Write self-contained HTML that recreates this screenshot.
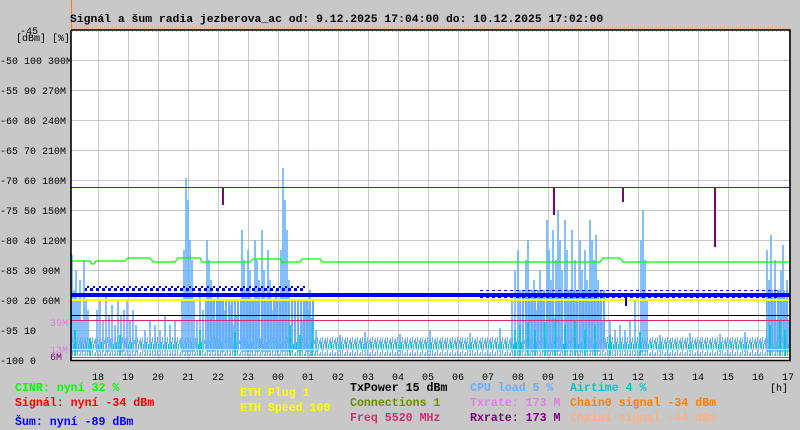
<!DOCTYPE html>
<html><head><meta charset="utf-8"><style>
html,body{margin:0;padding:0;background:#c8c8c8;width:800px;height:430px;overflow:hidden}
svg{display:block}
text{font-family:"Liberation Mono",monospace}
.ax{font-size:10px;fill:#000}
.lg{font-size:11.6px;font-weight:bold}
</style></head><body>
<svg width="800" height="430" xmlns="http://www.w3.org/2000/svg">
<defs>
<pattern id="pb" width="5" height="14" patternUnits="userSpaceOnUse">
<rect x="0" y="2" width="1" height="10" fill="#66b0ff"/><rect x="1" y="6" width="1" height="8" fill="#00c8c8"/><rect x="2" y="0" width="1" height="7" fill="#66b0ff"/><rect x="3" y="8" width="1" height="6" fill="#00c8c8"/><rect x="4" y="4" width="1" height="4" fill="#66b0ff"/>
</pattern>
<pattern id="po" width="4" height="6" patternUnits="userSpaceOnUse">
<rect x="0" y="1" width="1" height="5" fill="#ffb080"/><rect x="2" y="3" width="1" height="3" fill="#ffb080"/>
</pattern>
<pattern id="pn" width="6" height="8" patternUnits="userSpaceOnUse">
<rect x="0" y="0" width="3" height="3" fill="#0000ff"/><rect x="3" y="5" width="2" height="3" fill="#0000ff"/>
</pattern>
<pattern id="pd" width="3" height="9" patternUnits="userSpaceOnUse">
<rect x="0" y="0" width="2" height="9" fill="#66b0ff"/>
</pattern>
</defs>
<rect x="71" y="30" width="719" height="330" fill="#fff"/>
<path stroke="#c8c8c8" stroke-width="1" d="M98.5 30V360M128.5 30V360M158.5 30V360M188.5 30V360M218.5 30V360M248.5 30V360M278.5 30V360M308.5 30V360M338.5 30V360M368.5 30V360M398.5 30V360M428.5 30V360M458.5 30V360M488.5 30V360M518.5 30V360M548.5 30V360M578.5 30V360M608.5 30V360M638.5 30V360M668.5 30V360M698.5 30V360M728.5 30V360M758.5 30V360M71 60.5H790M71 90.5H790M71 120.5H790M71 150.5H790M71 180.5H790M71 210.5H790M71 240.5H790M71 270.5H790M71 300.5H790M71 330.5H790"/>
<rect x="71" y="24" width="719" height="6" fill="url(#po)"/>
<rect x="71" y="30" width="719" height="2" fill="url(#po)"/>
<rect x="71" y="0" width="1" height="30" fill="#ff8000"/>
<rect x="71" y="337" width="719" height="19" fill="url(#pb)"/>
<rect x="205" y="300" width="110" height="50" fill="url(#pd)"/>
<rect x="520" y="290" width="85" height="60" fill="url(#pd)"/>
<rect x="766" y="290" width="23" height="60" fill="url(#pd)"/>
<path stroke="#66b0ff" stroke-width="1.6" fill="none" d="M72 352V255M74 352V290M76 352V270M78 352V300M80 352V280M82 352V320M84 352V260M86 352V300M88 352V310M97 352V310M100 352V300M103 352V320M106 352V295M109 352V315M112 352V305M115 352V325M118 352V300M121 352V315M124 352V310M127 352V300M130 352V320M133 352V310M136 352V325M145 352V330M150 352V320M155 352V325M160 352V330M165 352V315M170 352V325M175 352V320M182 352V300M184 352V250M186 352V178M188 352V200M190 352V240M192 352V260M194 352V300M197 352V320M200 352V290M203 352V310M207 352V240M209 352V260M211 352V280M213 352V300M215 352V320M218 352V290M221 352V300M224 352V310M227 352V320M230 352V305M233 352V325M236 352V315M242 352V230M244 352V260M246 352V290M248 352V250M250 352V270M252 352V300M255 352V240M257 352V260M259 352V280M262 352V230M264 352V270M266 352V300M268 352V250M270 352V280M273 352V310M276 352V290M278 352V320M281 352V250M283 352V168M285 352V200M287 352V230M289 352V280M292 352V300M298 352V330M302 352V320M306 352V300M308 352V310M310 352V290M313 352V320M316 352V330M340 352V335M365 352V332M400 352V334M430 352V330M470 352V333M500 352V328M512 352V300M515 352V270M518 352V250M520 352V290M523 352V320M526 352V260M528 352V240M531 352V300M534 352V280M537 352V310M540 352V270M543 352V300M547 352V220M549 352V250M551 352V280M553 352V230M556 352V260M558 352V210M560 352V240M562 352V270M565 352V220M567 352V250M570 352V290M572 352V230M575 352V260M577 352V300M580 352V240M582 352V270M585 352V250M587 352V280M590 352V220M592 352V240M594 352V260M596 352V235M598 352V280M600 352V300M603 352V320M610 352V320M615 352V330M620 352V325M625 352V330M630 352V320M635 352V300M641 352V240M643 352V210M645 352V260M647 352V300M660 352V335M690 352V333M720 352V334M745 352V332M767 352V250M769 352V280M771 352V235M773 352V300M775 352V260M777 352V320M779 352V290M781 352V270M783 352V245M785 352V300M787 352V280M789 352V320"/>
<path stroke="#00c8c8" stroke-width="1.6" fill="none" d="M75 356V330M90 356V338M120 356V335M200 356V330M235 356V332M290 356V325M300 356V335M312 356V318M515 356V330M520 356V325M528 356V322M535 356V330M545 356V322M555 356V318M565 356V325M575 356V320M585 356V330M595 356V326M610 356V335M640 356V332M770 356V325M780 356V320M785 356V330"/>
<rect x="71" y="293" width="719" height="4" fill="#0000ff"/>
<rect x="85" y="286" width="220" height="10" fill="url(#pn)"/>
<rect x="480" y="290" width="300" height="8" fill="url(#pn)"/>
<rect x="71" y="187" width="719" height="1" fill="#800080"/>
<path stroke="#00ff00" stroke-width="1.2" fill="none" d="M71 261H90L92 264H94L96 261H125L128 258H150L153 262H175L178 258H200L202 262H250L253 259H280L282 262H300L302 259H320L322 262H600L603 258H620L623 262H790"/>
<rect x="71" y="299" width="719" height="2" fill="#ffff00"/>
<rect x="71" y="315" width="719" height="1" fill="#000"/>
<rect x="71" y="320" width="719" height="1" fill="#d03070"/>
<rect x="71" y="349" width="719" height="1" fill="#ffff00"/>
<rect x="71" y="357" width="719" height="1" fill="#808000"/>
<rect x="222" y="187" width="2" height="18" fill="#800080"/>
<rect x="553" y="187" width="2" height="28" fill="#800080"/>
<rect x="622" y="187" width="2" height="15" fill="#800080"/>
<rect x="714" y="187" width="2" height="60" fill="#800080"/>
<rect x="625" y="296" width="2" height="10" fill="#0000ff"/>
<path d="M71 30V360.5H790V30H71" fill="none" stroke="#000" stroke-width="1.6"/>
<text x="70" y="22" style="font-size:11.4px;font-weight:bold">Signál a šum radia jezberova_ac od: 9.12.2025 17:04:00 do: 10.12.2025 17:02:00</text>
<g class="ax">
<text x="20" y="34">-45</text>
<text x="16" y="41">[dBm] [%]</text>
<text x="0" y="64">-50 100 300M</text>
<text x="0" y="94">-55 90 270M</text>
<text x="0" y="124">-60 80 240M</text>
<text x="0" y="154">-65 70 210M</text>
<text x="0" y="184">-70 60 180M</text>
<text x="0" y="214">-75 50 150M</text>
<text x="0" y="244">-80 40 120M</text>
<text x="0" y="274">-85 30 90M</text>
<text x="0" y="304">-90 20 60M</text>
<text x="0" y="334">-95 10</text>
<text x="50" y="326" fill="#e080e0">39M</text>
<text x="50" y="353" fill="#e080e0">13M</text>
<text x="0" y="364">-100 0</text>
<text x="50" y="360" fill="#800080">6M</text>
<text x="92" y="380">18</text><text x="122" y="380">19</text><text x="152" y="380">20</text><text x="182" y="380">21</text><text x="212" y="380">22</text><text x="242" y="380">23</text><text x="272" y="380">00</text><text x="302" y="380">01</text><text x="332" y="380">02</text><text x="362" y="380">03</text><text x="392" y="380">04</text><text x="422" y="380">05</text><text x="452" y="380">06</text><text x="482" y="380">07</text><text x="512" y="380">08</text><text x="542" y="380">09</text><text x="572" y="380">10</text><text x="602" y="380">11</text><text x="632" y="380">12</text><text x="662" y="380">13</text><text x="692" y="380">14</text><text x="722" y="380">15</text><text x="752" y="380">16</text><text x="782" y="380">17</text>
<text x="770" y="391">[h]</text>
</g>
<g class="lg">
<text x="15" y="391" fill="#00ff00">CINR: nyní 32 %</text>
<text x="15" y="406" fill="#ff0000">Signál: nyní -34 dBm</text>
<text x="15" y="425" fill="#0000ff">Šum: nyní -89 dBm</text>
<text x="240" y="396" fill="#ffff00">ETH Plug 1</text>
<text x="240" y="411" fill="#ffff00">ETH Speed 100</text>
<text x="350" y="391" fill="#000">TxPower 15 dBm</text>
<text x="350" y="406" fill="#6b8e00">Connections 1</text>
<text x="350" y="421" fill="#d03070">Freq 5520 MHz</text>
<text x="470" y="391" fill="#66b0ff">CPU load 5 %</text>
<text x="470" y="406" fill="#e080e0">Txrate: 173 M</text>
<text x="470" y="421" fill="#800080">Rxrate: 173 M</text>
<text x="570" y="391" fill="#00c8c8">Airtime 4 %</text>
<text x="570" y="406" fill="#ff8000">Chain0 signal -34 dBm</text>
<text x="570" y="421" fill="#ffb080">Chain1 signal -44 dBm</text>
</g>
</svg>
</body></html>
